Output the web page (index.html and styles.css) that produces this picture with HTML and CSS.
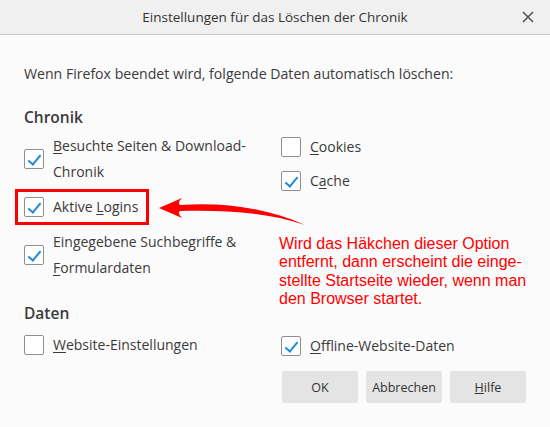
FILE: index.html
```html
<!DOCTYPE html>
<html>
<head>
    <meta charset="utf-8">
    <title>Einstellungen für das Löschen der Chronik</title>
    <link rel="stylesheet" href="styles.css">
</head>

<body>
    <div class="dialog">
        <div class="title-bar">
            <span class="title">Einstellungen für das Löschen der Chronik</span>
            <svg class="close" width="12" height="12" viewBox="0 0 12 12">
                <path d="M1 1 L11 11 M11 1 L1 11" stroke="#555" stroke-width="1.6" fill="none"/>
            </svg>
        </div>

        <div class="content">
            <p class="intro">Wenn Firefox beendet wird, folgende Daten automatisch löschen:</p>

            <h2 class="section">Chronik</h2>
            <div class="columns">
                <div class="col">
                    <label class="option">
                        <span class="box checked"></span>
                        <span class="text"><u>B</u>esuchte Seiten &amp; Download-<br>Chronik</span>
                    </label>
                    <label class="option marked">
                        <span class="box checked"></span>
                        <span class="text">Aktive <u>L</u>ogins</span>
                    </label>
                    <label class="option">
                        <span class="box checked"></span>
                        <span class="text">Eingegebene Suchbegriffe &amp;<br><u>F</u>ormulardaten</span>
                    </label>
                </div>
                <div class="col right">
                    <label class="option">
                        <span class="box"></span>
                        <span class="text"><u>C</u>ookies</span>
                    </label>
                    <label class="option">
                        <span class="box checked"></span>
                        <span class="text">C<u>a</u>che</span>
                    </label>
                </div>
            </div>

            <h2 class="section daten">Daten</h2>
            <div class="columns">
                <div class="col">
                    <label class="option">
                        <span class="box"></span>
                        <span class="text"><u>W</u>ebsite-Einstellungen</span>
                    </label>
                </div>
                <div class="col right">
                    <label class="option">
                        <span class="box checked"></span>
                        <span class="text"><u>O</u>ffline-Website-Daten</span>
                    </label>
                </div>
            </div>

            <div class="buttons">
                <button class="btn">OK</button>
                <button class="btn">Abbrechen</button>
                <button class="btn"><u>H</u>ilfe</button>
            </div>
        </div>

        <!-- hint arrow pointing at the logins option -->
        <svg class="arrow" width="150" height="36" viewBox="0 0 150 36">
            <path d="M4 13 L27 3 Q22 8 25 10 C70 7 112 13 150 30 C112 17 70 15 25 16 Q22 18 27 23 Z" fill="#f00"/>
        </svg>
        <p class="note">Wird das Häkchen dieser Option<br>entfernt, dann erscheint die einge-<br>stellte Startseite wieder, wenn man<br>den Browser startet.</p>
    </div>
</body>

</html>
```

FILE: styles.css
```css
body {
    margin: 0;
    background-color: #fbfbfb;
    font-family: "Open Sans", "Noto Sans", sans-serif;
    color: #3a3a3a;
}

.dialog {
    position: relative;
    width: 550px;
    height: 427px;
}

.title-bar {
    height: 34px;
    background-color: #f0f0f0;
    border-bottom: 1px solid #c8c8c8;
    display: flex;
    align-items: center;
    justify-content: center;
    position: relative;
}

.title {
    font-size: 13.5px;
    color: #333;
}

.close {
    position: absolute;
    right: 16px;
    top: 11px;
}

.content {
    padding: 0 24px;
}

.intro {
    margin: 28px 0 0;
    font-size: 14.1px;
    line-height: 22px;
}

.section {
    margin: 21px 0 5px;
    font-size: 15.5px;
    font-weight: 600;
    line-height: 22px;
    color: #3a3a3a;
}

.section.daten {
    margin: 21px 0 8px;
}

.columns {
    display: grid;
    grid-template-columns: 257px 1fr;
}

.col {
    display: flex;
    flex-direction: column;
    gap: 9px;
}

.col.right {
    gap: 8px;
    padding-top: 1px;
}

.option {
    display: flex;
    align-items: center;
    gap: 9px;
    font-size: 14px;
    line-height: 26px;
}

.option.marked {
    border: 3px solid #f00;
    margin: -5px 0 -5px -9px;
    padding: 2px 8px 2px 6px;
    align-self: flex-start;
}

.box {
    flex: none;
    width: 18px;
    height: 18px;
    border: 1px solid #8e8e8e;
    border-radius: 2px;
    background-color: #fff;
    position: relative;
}

.box.checked::after {
    content: "";
    position: absolute;
    left: 6px;
    top: 2px;
    width: 5px;
    height: 11px;
    border-right: 2px solid #1f8ad8;
    border-bottom: 2px solid #1f8ad8;
    transform: rotate(40deg);
}

.text u {
    text-underline-offset: 2px;
}

.buttons {
    display: flex;
    justify-content: flex-end;
    gap: 8px;
    margin-top: 12px;
}

.btn {
    width: 76px;
    height: 32px;
    border: none;
    border-radius: 2px;
    background-color: #e4e4e4;
    font-family: "Open Sans", "Noto Sans", sans-serif;
    font-size: 12.5px;
    color: #333;
}

.arrow {
    position: absolute;
    left: 155px;
    top: 195px;
}

.note {
    position: absolute;
    left: 279px;
    top: 235px;
    margin: 0;
    font-family: "Liberation Sans", Arial, sans-serif;
    font-size: 16px;
    line-height: 18.3px;
    color: #f00;
    white-space: nowrap;
}
```
